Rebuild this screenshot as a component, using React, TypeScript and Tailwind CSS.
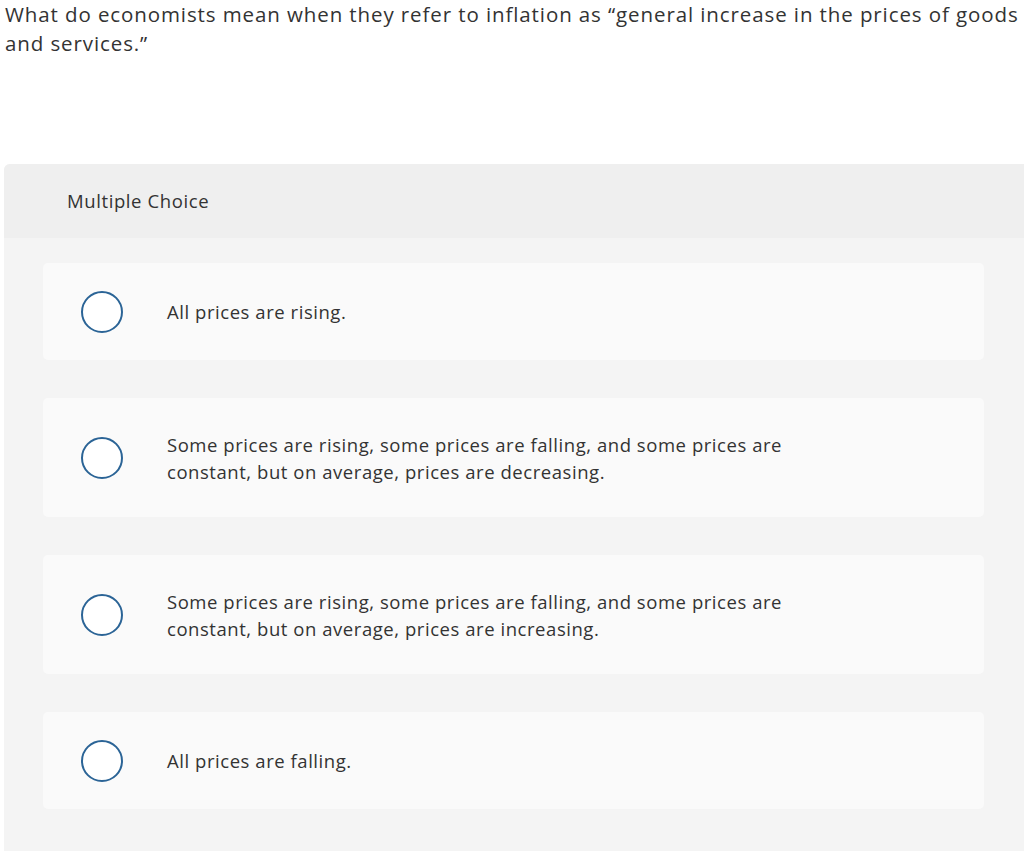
import React from "react";

const options = [
  { text: "All prices are rising.", h: "h-[97px]" },
  {
    text: "Some prices are rising, some prices are falling, and some prices are constant, but on average, prices are decreasing.",
    h: "h-[119px]",
  },
  {
    text: "Some prices are rising, some prices are falling, and some prices are constant, but on average, prices are increasing.",
    h: "h-[119px]",
  },
  { text: "All prices are falling.", h: "h-[97px]" },
];

export default function App() {
  return (
    <div
      className="w-[1024px] h-[851px] overflow-hidden bg-white text-[#333333] flex flex-col"
      style={{ fontFamily: "'Open Sans', sans-serif" }}
    >
      <p className="pl-[5px] text-[20.5px] tracking-[0.9px] leading-[29px]">
        What do economists mean when they refer to inflation as “general increase in the prices of goods and services.”
      </p>
      <div className="ml-[4px] mt-[106px] flex-1 rounded-tl-[6px] overflow-hidden bg-[#f4f4f4]">
        <div className="h-[74px] bg-[#efefef] flex items-center pl-[63px] text-[18.5px] tracking-[0.6px]">
          Multiple Choice
        </div>
        <div className="pt-[25px] pl-[39px] pr-[40px] flex flex-col gap-[38px]">
          {options.map((o, i) => (
            <div
              key={i}
              className={`${o.h} bg-[#fafafa] rounded-[5px] flex items-center`}
            >
              <div className="ml-[38px] w-[42px] h-[42px] shrink-0 rounded-full border-2 border-[#2b6496] bg-white" />
              <div className="ml-[44px] w-[640px] text-[18.5px] tracking-[0.55px] leading-[27px]">{o.text}</div>
            </div>
          ))}
        </div>
      </div>
    </div>
  );
}
